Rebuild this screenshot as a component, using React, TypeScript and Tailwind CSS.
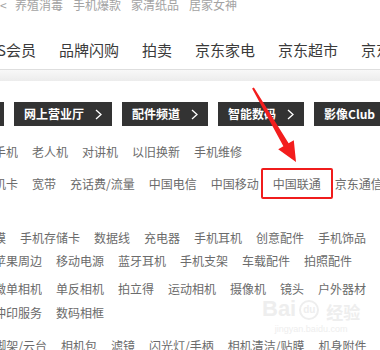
import type { ReactNode } from 'react';

function Clip({ w, children }: { w: string; children: ReactNode }) {
  return (
    <span className={`flex shrink-0 justify-end overflow-hidden whitespace-nowrap ${w}`}>
      <span className="shrink-0">{children}</span>
    </span>
  );
}

function Chevron() {
  return (
    <svg width="7" height="11" viewBox="0 0 7 11" className="shrink-0">
      <polyline points="1,1 6,5.5 1,10" fill="none" stroke="#fff" strokeWidth="1.3" />
    </svg>
  );
}

function Channel({ label, arrow = true }: { label: string; arrow?: boolean }) {
  return (
    <div className="flex h-[24px] shrink-0 items-center gap-[11px] whitespace-nowrap bg-[#333] px-[10px] text-[12px] font-bold text-white">
      {label}
      {arrow && <Chevron />}
    </div>
  );
}

function Row({ className, children }: { className: string; children: ReactNode }) {
  return <div className={`flex items-center whitespace-nowrap ${className}`}>{children}</div>;
}

export default function App() {
  return (
    <div className="relative h-[350px] w-[380px] overflow-hidden bg-white font-['Noto_Sans_CJK_SC',sans-serif]">
      <div className="flex flex-col">
        {/* top hot words */}
        <Row className="-mt-[7px] h-[24px] gap-[10px] text-[12px] text-[#a3a3a3]">
          <span className="w-[5px]">&lt;</span>
          <span>养殖消毒</span>
          <span>手机爆款</span>
          <span>家清纸品</span>
          <span>居家女神</span>
        </Row>

        {/* main nav */}
        <Row className="mt-[21px] h-[24px] gap-[23px] text-[15px] text-[#3a3a3a]">
          <Clip w="w-[36px]">PLUS会员</Clip>
          <span>品牌闪购</span>
          <span>拍卖</span>
          <span>京东家电</span>
          <span>京东超市</span>
          <span>京东生鲜</span>
        </Row>

        <div className="mt-[7px] h-[12px] border-t border-[#dedede] bg-gradient-to-b from-[#f8f8f8] to-[#ececec]" />

        {/* channels */}
        <div className="mt-[21px] flex gap-[10px]">
          <div className="h-[24px] w-[4px] shrink-0 bg-[#333]" />
          <Channel label="网上营业厅" />
          <Channel label="配件频道" />
          <Channel label="智能数码" />
          <Channel label="影像Club" arrow={false} />
        </div>

        <div className="text-[12px] text-[#6b6b6b]">
          <Row className="mt-[14px] h-[24px] gap-[14px]">
            <Clip w="w-[18px]">游戏手机</Clip>
            <span>老人机</span>
            <span>对讲机</span>
            <span>以旧换新</span>
            <span>手机维修</span>
          </Row>

          <Row className="mt-[8px] h-[24px] gap-[14px]">
            <Clip w="w-[18px]">手机卡</Clip>
            <span>宽带</span>
            <span>充话费/流量</span>
            <span>中国电信</span>
            <span>中国移动</span>
            <span className="relative">
              中国联通
              <span className="absolute -bottom-[6px] -left-[12px] -right-[12px] -top-[7px] rounded-[2px] border-2 border-[#f01c1c]" />
            </span>
            <span>京东通信</span>
          </Row>

          <Row className="mt-[30px] h-[23px] gap-[14px]">
            <Clip w="w-[6px]">手机贴膜</Clip>
            <span>手机存储卡</span>
            <span>数据线</span>
            <span>充电器</span>
            <span>手机耳机</span>
            <span>创意配件</span>
            <span>手机饰品</span>
          </Row>
          <Row className="h-[24px] gap-[14px]">
            <Clip w="w-[42px]">苹果周边</Clip>
            <span>移动电源</span>
            <span>蓝牙耳机</span>
            <span>手机支架</span>
            <span>车载配件</span>
            <span>拍照配件</span>
          </Row>

          <Row className="mt-[4px] h-[24px] gap-[14px]">
            <Clip w="w-[42px]">微单相机</Clip>
            <span>单反相机</span>
            <span>拍立得</span>
            <span>运动相机</span>
            <span>摄像机</span>
            <span>镜头</span>
            <span>户外器材</span>
          </Row>
          <Row className="h-[24px] gap-[14px]">
            <Clip w="w-[42px]">冲印服务</Clip>
            <span>数码相框</span>
          </Row>

          <Row className="mt-[9px] h-[24px] gap-[14px]">
            <Clip w="w-[47px]">三脚架/云台</Clip>
            <span>相机包</span>
            <span>滤镜</span>
            <span>闪光灯/手柄</span>
            <span>相机清洁/贴膜</span>
            <span>机身附件</span>
          </Row>
        </div>
      </div>

      {/* red pointer arrow */}
      <svg className="pointer-events-none absolute left-0 top-0" width="380" height="350">
        <polygon
          points="252.1,88.5 253.9,87.5 288.6,143.2 293.8,140.2 296,162 278.2,149.2 283.4,146.2"
          fill="#f31d1d"
        />
      </svg>

      {/* watermark */}
      <div className="pointer-events-none absolute left-[262px] top-[298px] flex flex-col items-center text-[#eeeeee]">
        <div className="flex items-end gap-[3px] leading-none">
          <span className="font-['Liberation_Sans',sans-serif] text-[22px] font-bold">Bai</span>
          <span className="flex h-[20px] w-[20px] items-center justify-center rounded-full border-2 border-[#eeeeee] font-['Liberation_Sans',sans-serif] text-[10px] font-bold">
            du
          </span>
          <span className="ml-[4px] text-[17px] font-bold">经验</span>
        </div>
        <span className="mt-[3px] font-['Liberation_Sans',sans-serif] text-[9px]">jingyan.baidu.com</span>
      </div>
    </div>
  );
}
